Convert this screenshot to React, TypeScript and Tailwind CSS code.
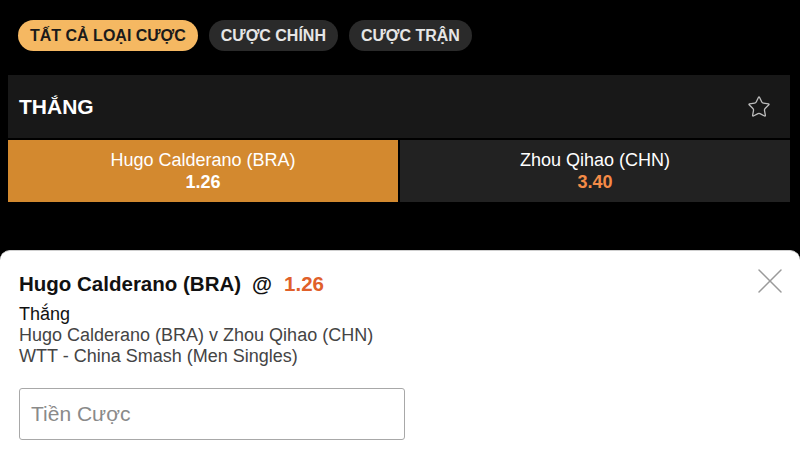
import { Star, X } from "lucide-react";

const tabs = ["TẤT CẢ LOẠI CƯỢC", "CƯỢC CHÍNH", "CƯỢC TRẬN"];

export default function App() {
    return (
        <div className="relative h-[457px] w-[800px] overflow-hidden bg-black font-['Liberation_Sans',Arial,sans-serif]">
            {/* tabs */}
            <div className="flex gap-[11px] px-[18px] pt-[20px]">
                {tabs.map((t, i) => (
                    <div
                        key={t}
                        className={`flex h-[31px] items-center rounded-full px-[12px] text-[16px] font-bold ${
                            i === 0 ? "bg-[#f5b862] text-[#1a1a1a]" : "bg-[#2a2a2a] text-[#e6e6e6]"
                        }`}
                    >
                        {t}
                    </div>
                ))}
            </div>

            {/* market card */}
            <div className="mx-[8px] mt-[24px] w-[782px]">
                <div className="flex h-[63px] items-center justify-between bg-[#181818] pl-[11px] pr-[19px]">
                    <span className="text-[21px] font-bold text-white">THẮNG</span>
                    <Star className="h-[24px] w-[24px] text-[#bdbdbd]" strokeWidth={1.3} />
                </div>
                <div className="mt-[2px] flex h-[62px]">
                    <div className="flex flex-1 flex-col items-center justify-center bg-[#d3892f] leading-[22px]">
                        <span className="text-[18px] text-white">Hugo Calderano (BRA)</span>
                        <span className="text-[18px] font-bold text-white">1.26</span>
                    </div>
                    <div className="ml-[2px] flex flex-1 flex-col items-center justify-center bg-[#222222] leading-[22px]">
                        <span className="text-[18px] text-white">Zhou Qihao (CHN)</span>
                        <span className="text-[18px] font-bold text-[#f58b47]">3.40</span>
                    </div>
                </div>
            </div>

            {/* bet slip sheet */}
            <div className="absolute left-0 top-[250px] h-[207px] w-[800px] rounded-t-[10px] border-t border-[#cfcfcf] bg-white px-[19px] pt-[20px]">
                <div className="flex items-center text-[20.5px] font-bold leading-[26px]">
                    <span className="text-[#111]">Hugo Calderano (BRA)</span>
                    <span className="ml-[11px] text-[#111]">@</span>
                    <span className="ml-[12px] text-[#e0602a]">1.26</span>
                </div>
                <X className="absolute right-[8px] top-[8px] h-[44px] w-[44px] text-[#9a9a9a]" strokeWidth={0.8} />
                <div className="mt-[7px] text-[18px] leading-[21px] text-[#111]">Thắng</div>
                <div className="text-[18px] leading-[21px] text-[#444]">Hugo Calderano (BRA) v Zhou Qihao (CHN)</div>
                <div className="text-[18px] leading-[21px] text-[#444]">WTT - China Smash (Men Singles)</div>
                <div className="mt-[21px] flex h-[52px] w-[386px] items-center rounded-[3px] border border-[#a8a8a8] px-[11px] text-[21px] text-[#8a8a8a]">
                    Tiền Cược
                </div>
            </div>
        </div>
    );
}
